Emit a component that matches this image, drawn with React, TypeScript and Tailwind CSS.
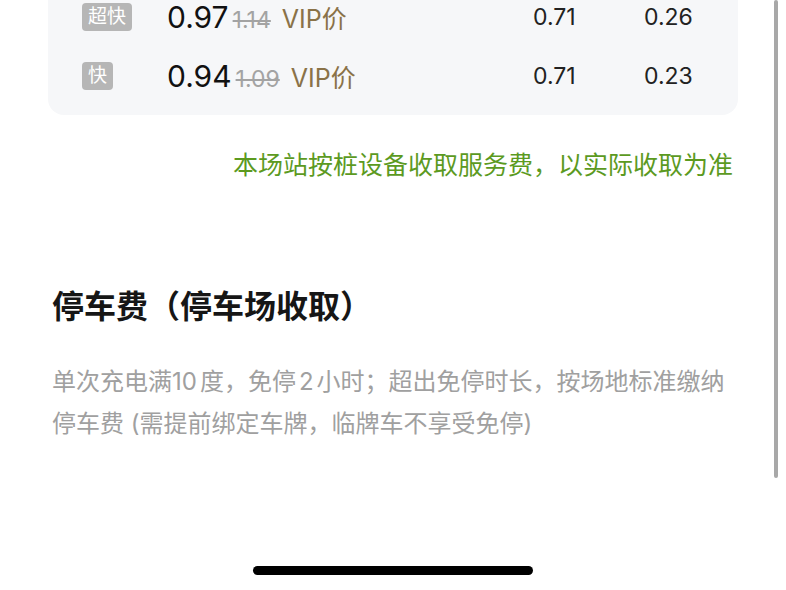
const rows = [
  { tag: "超快", price: "0.97", old: "1.14", a: "0.71", b: "0.26" },
  { tag: "快", price: "0.94", old: "1.09", a: "0.71", b: "0.23" },
];

const sans = "font-['Inter','Noto_Sans_CJK_SC',sans-serif]";

export default function App() {
  return (
    <div className={`relative flex h-[590px] w-[786px] flex-col overflow-hidden bg-white ${sans}`}>
      {/* 价格卡片 */}
      <div className="mx-[48px] flex flex-col gap-[25px] rounded-b-[16px] bg-[#f6f7f9] pb-[22px] pl-[34px]">
        {rows.map((r) => (
          <div key={r.tag} className="flex h-[34px] items-center">
            <div className="w-[85px]">
              <span className="flex h-[28px] w-fit items-center rounded-[4px] bg-[#b6b6b6] px-[6px] text-[19px] text-white">
                {r.tag}
              </span>
            </div>
            <div className="flex flex-1 items-baseline">
              <span className="text-[30px] leading-none text-[#111]">{r.price}</span>
              <span className="ml-[4px] text-[23px] leading-none text-[#a3a3a3] line-through">{r.old}</span>
              <span className="ml-[11px] text-[25px] leading-none text-[#8a7248]">VIP价</span>
            </div>
            <div className="w-[111px] text-[23px] text-[#222]">{r.a}</div>
            <div className="w-[94px] text-[23px] text-[#222]">{r.b}</div>
          </div>
        ))}
      </div>

      <p className="mr-[53px] mt-[32px] text-right text-[25px] leading-[36px] text-[#5c9a1f]">
        本场站按桩设备收取服务费，以实际收取为准
      </p>

      <h2 className="ml-[52px] mt-[104px] text-[32px] font-bold leading-[40px] text-[#161616]">
        停车费（停车场收取）
      </h2>

      <div className="ml-[52px] mt-[34px] text-[24px] leading-[42px] text-[#a0a0a0]">
        <p>
          单次充电满<span className="mr-[3px]">10</span>度，免停<span className="mx-[3px]">2</span>小时；超出免停时长，按场地标准缴纳
        </p>
        <p>停车费 (需提前绑定车牌，临牌车不享受免停)</p>
      </div>

      <div className="mb-[15px] mt-auto flex justify-center">
        <div className="h-[9px] w-[280px] rounded-full bg-black" />
      </div>

      {/* 滚动条 */}
      <div className="absolute right-[8px] top-0 h-[478px] w-[4px] rounded-full bg-[#a8a8a8]" />
    </div>
  );
}
